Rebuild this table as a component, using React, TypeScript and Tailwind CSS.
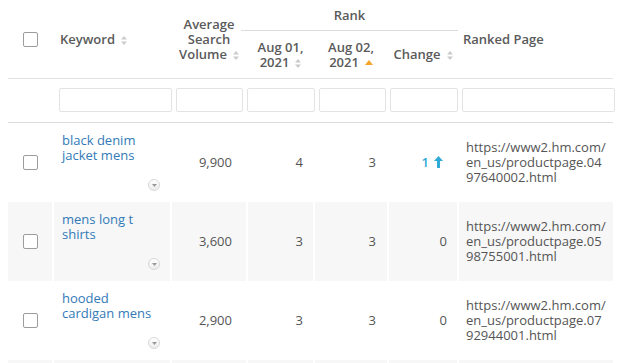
import React from 'react'

interface Row {
  keyword: string
  volume: string
  aug01: number
  aug02: number
  change: number
  url: string
}

const rows: Row[] = [
  { keyword: 'black denim jacket mens', volume: '9,900', aug01: 4, aug02: 3, change: 1, url: 'https://www2.hm.com/en_us/productpage.0497640002.html' },
  { keyword: 'mens long t shirts', volume: '3,600', aug01: 3, aug02: 3, change: 0, url: 'https://www2.hm.com/en_us/productpage.0598755001.html' },
  { keyword: 'hooded cardigan mens', volume: '2,900', aug01: 3, aug02: 3, change: 0, url: 'https://www2.hm.com/en_us/productpage.0792944001.html' },
  { keyword: 'mens puffer jacket', volume: '2,400', aug01: 5, aug02: 5, change: 0, url: 'https://www2.hm.com/en_us/productpage.0711053001.html' },
]

const cols = 'grid grid-cols-[44px_116px_74px_65px_72px_68px_154px] gap-x-[2px]'

const SortIcon = () => (
  <svg width="6" height="9" viewBox="0 0 6 9" className="inline-block ml-[6px] align-[-1px]">
    <path d="M3 0 L6 3.5 L0 3.5 Z" fill="#cbcbcb" />
    <path d="M0 5.5 L6 5.5 L3 9 Z" fill="#cbcbcb" />
  </svg>
)

const SortUp = () => (
  <svg width="8" height="5" viewBox="0 0 8 5" className="inline-block ml-[6px] align-[2px]">
    <path d="M4 0 L8 5 L0 5 Z" fill="#f3a52c" />
  </svg>
)

const Checkbox = () => (
  <div className="w-[15px] h-[15px] border border-[#9c9c9c] rounded-[2px] bg-white" />
)

const UpArrow = () => (
  <svg width="9" height="12" viewBox="0 0 9 12" className="inline-block ml-[5px] align-[-1px]">
    <path d="M4.5 0 L9 5 L6 5 L6 12 L3 12 L3 5 L0 5 Z" fill="#2fa9d6" />
  </svg>
)

const Expander = () => (
  <div className="w-[12px] h-[12px] rounded-full border border-[#d8d8d8] bg-gradient-to-b from-white to-[#ececec] flex items-center justify-center">
    <svg width="5" height="3" viewBox="0 0 5 3">
      <path d="M0 0 L5 0 L2.5 3 Z" fill="#9a9a9a" />
    </svg>
  </div>
)

export default function App() {
  return (
    <div className="bg-white min-h-screen pl-2 font-['Open_Sans',sans-serif] text-[13px] text-[#555]">
      <div className="w-[605px]">
        {/* Header */}
        <div className={`${cols} grid-rows-[31px_47px] border-b border-[#e2e2e2] font-semibold text-[#5a5a5a] leading-[15px]`}>
          <div className="col-start-1 row-start-1 row-span-2 flex items-center justify-center">
            <Checkbox />
          </div>
          <div className="col-start-2 row-start-1 row-span-2 flex items-center pl-[6px]">
            <span>Keyword<SortIcon /></span>
          </div>
          <div className="col-start-3 row-start-1 row-span-2 flex items-center justify-center text-center">
            <span>Average Search Volume<SortIcon /></span>
          </div>
          <div className="col-start-4 col-span-3 row-start-1 flex items-center justify-center border-b border-[#dcdcdc] -ml-[7px] -mr-[1px]">
            Rank
          </div>
          <div className="col-start-4 row-start-2 flex items-center justify-center text-center px-1">
            <span>Aug 01, 2021<SortIcon /></span>
          </div>
          <div className="col-start-5 row-start-2 flex items-center justify-center text-center px-1">
            <span>Aug 02, 2021<SortUp /></span>
          </div>
          <div className="col-start-6 row-start-2 flex items-center justify-center">
            <span>Change<SortIcon /></span>
          </div>
          <div className="col-start-7 row-start-1 row-span-2 flex items-center pl-1">
            Ranked Page
          </div>
        </div>

        {/* Filters */}
        <div className="flex gap-1 pl-[51px] pt-[9px] pb-[10px] border-b border-[#dedede]">
          <input className="w-[113px] h-[24px] border border-[#e3e3e3] rounded-[2px] bg-white" />
          <input className="w-[67px] h-[24px] border border-[#e3e3e3] rounded-[2px] bg-white" />
          <input className="w-[68px] h-[24px] border border-[#e3e3e3] rounded-[2px] bg-white" />
          <input className="w-[67px] h-[24px] border border-[#e3e3e3] rounded-[2px] bg-white" />
          <input className="w-[68px] h-[24px] border border-[#e3e3e3] rounded-[2px] bg-white" />
          <input className="w-[153px] h-[24px] border border-[#e3e3e3] rounded-[2px] bg-white" />
        </div>

        {/* Body */}
        {rows.map((r, i) => {
          const bg = i % 2 === 1 ? 'bg-[#f7f7f7]' : 'bg-white'
          return (
            <div key={i} className={`${cols} leading-[15px]`}>
              <div className={`${bg} flex items-center justify-center`}>
                <Checkbox />
              </div>
              <div className={`${bg} flex flex-col pl-2 pt-[10px] pb-[11px]`}>
                <a className="text-[#337ab7] w-[100px]">{r.keyword}</a>
                <div className="self-end mr-[10px] mt-auto pt-[16px]">
                  <Expander />
                </div>
              </div>
              <div className={`${bg} flex items-center justify-end pr-[14px]`}>{r.volume}</div>
              <div className={`${bg} flex items-center justify-end pr-[10px]`}>{r.aug01}</div>
              <div className={`${bg} flex items-center justify-end pr-[11px]`}>{r.aug02}</div>
              <div className={`${bg} flex items-center justify-end pr-[10px]`}>
                {r.change > 0 ? (
                  <span className="text-[#2fa9d6] font-semibold mr-[4px]">
                    {r.change}
                    <UpArrow />
                  </span>
                ) : (
                  <span>{r.change}</span>
                )}
              </div>
              <div className={`${bg} flex flex-col justify-center pl-[7px]`}>
                {(r.url.match(/.{1,20}/g) || []).map((part, j) => (
                  <span key={j}>{part}</span>
                ))}
              </div>
            </div>
          )
        })}
      </div>
    </div>
  )
}
